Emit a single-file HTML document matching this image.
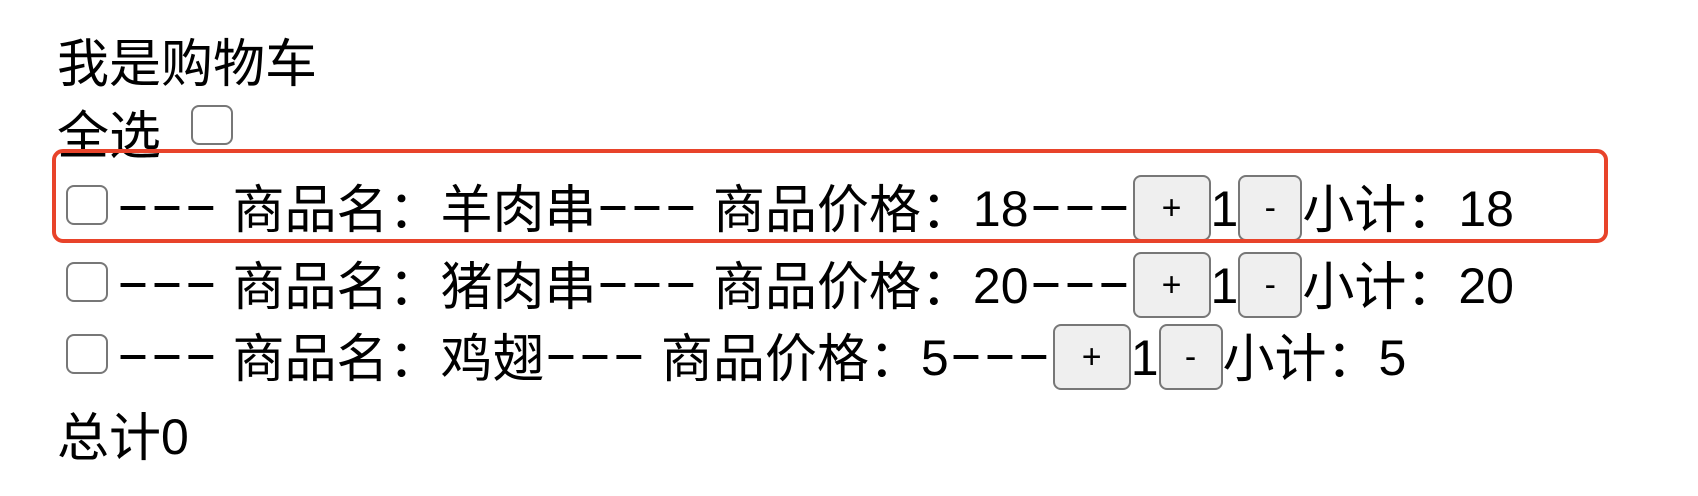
<!DOCTYPE html>
<html><head><meta charset="utf-8"><style>
body{margin:0;width:1698px;height:496px;background:#fff;position:relative;overflow:hidden;font-family:"Liberation Sans","Noto Sans CJK SC",sans-serif;font-size:52px;color:#000}
.r{position:absolute;left:57px;display:flex;align-items:center;white-space:pre;height:78px}
.n{font-size:50px;position:relative;top:4px}
.cb{display:inline-block;width:42px;height:40px;border:2.5px solid #777;border-radius:8px;box-sizing:border-box;background:#fff}
.d{display:inline-block;width:102px;overflow:visible}
.d i{font-style:normal;display:inline-block;transform:scaleX(1.96);transform-origin:left center}
.b{display:inline-block;height:66px;box-sizing:border-box;border:2.5px solid #777;border-radius:8px;background:#efefef;font-size:34px;display:flex;align-items:center;justify-content:center;margin-top:6px}
.p{width:78px;margin-left:2px}.m{width:64px}
.box{position:absolute;left:52px;top:149px;width:1556px;height:94px;border:4px solid #e8432a;border-radius:11px;box-sizing:border-box}
</style></head><body>
<div class="r" style="top:20px">我是购物车</div>
<div class="r" style="top:92px">全选<span style="display:inline-block;width:30px"></span><span class="cb" style="margin-top:-12px"></span></div>
<div class="r" style="top:166px;left:66px"><span class="cb"></span><span style="width:8px"></span><span class="d"><i>---</i></span> 商品名：羊肉串<span class="d"><i>---</i></span> 商品价格：<span class="n">18</span><span class="d"><i>---</i></span><span class="b p">+</span><span class="n">1</span><span class="b m">-</span>小计：<span class="n">18</span></div>
<div class="r" style="top:243px;left:66px"><span class="cb"></span><span style="width:8px"></span><span class="d"><i>---</i></span> 商品名：猪肉串<span class="d"><i>---</i></span> 商品价格：<span class="n">20</span><span class="d"><i>---</i></span><span class="b p">+</span><span class="n">1</span><span class="b m">-</span>小计：<span class="n">20</span></div>
<div class="r" style="top:315px;left:66px"><span class="cb"></span><span style="width:8px"></span><span class="d"><i>---</i></span> 商品名：鸡翅<span class="d"><i>---</i></span> 商品价格：<span class="n">5</span><span class="d"><i>---</i></span><span class="b p">+</span><span class="n">1</span><span class="b m">-</span>小计：<span class="n">5</span></div>
<div class="r" style="top:394px">总计<span class="n">0</span></div>
<div class="box"></div>
</body></html>
